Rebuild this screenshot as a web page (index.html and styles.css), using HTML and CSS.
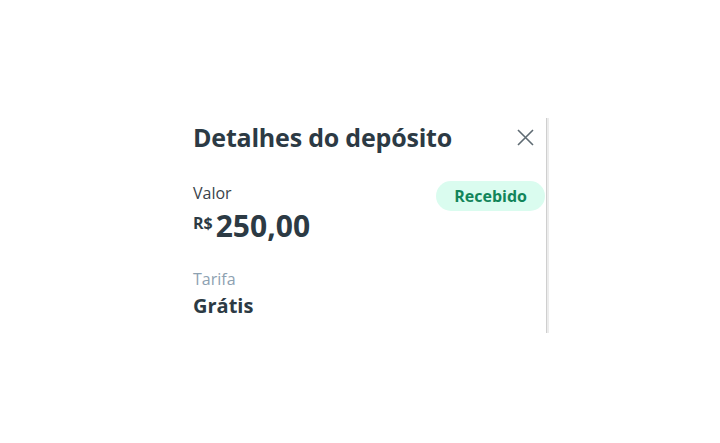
FILE: index.html
```html
<!DOCTYPE html>
<html lang="pt-BR">
<head>
  <meta charset="UTF-8">
  <meta name="viewport" content="width=device-width, initial-scale=1.0">
  <title>Detalhes do depósito</title>
  <link rel="stylesheet" href="styles.css">
</head>
<body>
  <div class="panel">
    <div class="content">
      <div class="header">
        <h1>Detalhes do depósito</h1>
        <button class="close" type="button" aria-label="Fechar">
          <svg width="17" height="17" viewBox="0 0 17 17"><path d="M1 1L16 16M16 1L1 16" stroke="#5f6b73" stroke-width="1.6" fill="none"/></svg>
        </button>
      </div>

      <div class="row">
        <div>
          <div class="label">Valor</div>
          <div class="amount"><span class="currency">R$</span>250,00</div>
        </div>
        <span class="badge">Recebido</span>
      </div>

      <div class="fee">
        <div class="label muted">Tarifa</div>
        <div class="value">Grátis</div>
      </div>
    </div>
    <div class="scrollbar"></div>
  </div>
</body>
</html>
```

FILE: styles.css
```css
body {
  font-family: "Open Sans", "Noto Sans", sans-serif;
  background-color: #fff;
  color: #2c3a44;
  margin: 0;
  padding: 0;
}
.panel {
  display: flex;
  height: 215px;
  margin: 118px 0 0 193px;
}
.content {
  width: 352px;
}
.header {
  display: flex;
  justify-content: space-between;
  align-items: center;
  padding-top: 2px;
}
h1 {
  margin: 0;
  font-size: 25px;
  line-height: 34px;
  font-weight: 700;
  color: #2c3a44;
  letter-spacing: -0.2px;
}
.close {
  background: none;
  border: none;
  padding: 0;
  margin-right: 11px;
  cursor: pointer;
  display: flex;
}
.row {
  display: flex;
  justify-content: space-between;
  align-items: flex-start;
  margin-top: 28px;
}
.label {
  font-size: 16px;
  color: #3a434a;
  line-height: 22px;
}
.label.muted {
  color: #8da1b1;
}
.amount {
  font-size: 30px;
  font-weight: 700;
  line-height: 40px;
  margin-top: 2px;
  display: flex;
  align-items: flex-start;
}
.currency {
  font-size: 16px;
  line-height: 28px;
  margin: 3px 3px 0 0;
}
.badge {
  background-color: #dafcef;
  color: #12855a;
  font-weight: 700;
  font-size: 16px;
  line-height: 30px;
  padding: 0 18px;
  border-radius: 15px;
  margin-top: -1px;
}
.fee {
  margin-top: 22px;
}
.value {
  font-size: 20px;
  font-weight: 700;
  line-height: 28px;
  margin-top: 2px;
}
.scrollbar {
  width: 2px;
  background: #ececec;
  border-left: 1px solid #cfcfcf;
  margin-left: 1px;
}
```
